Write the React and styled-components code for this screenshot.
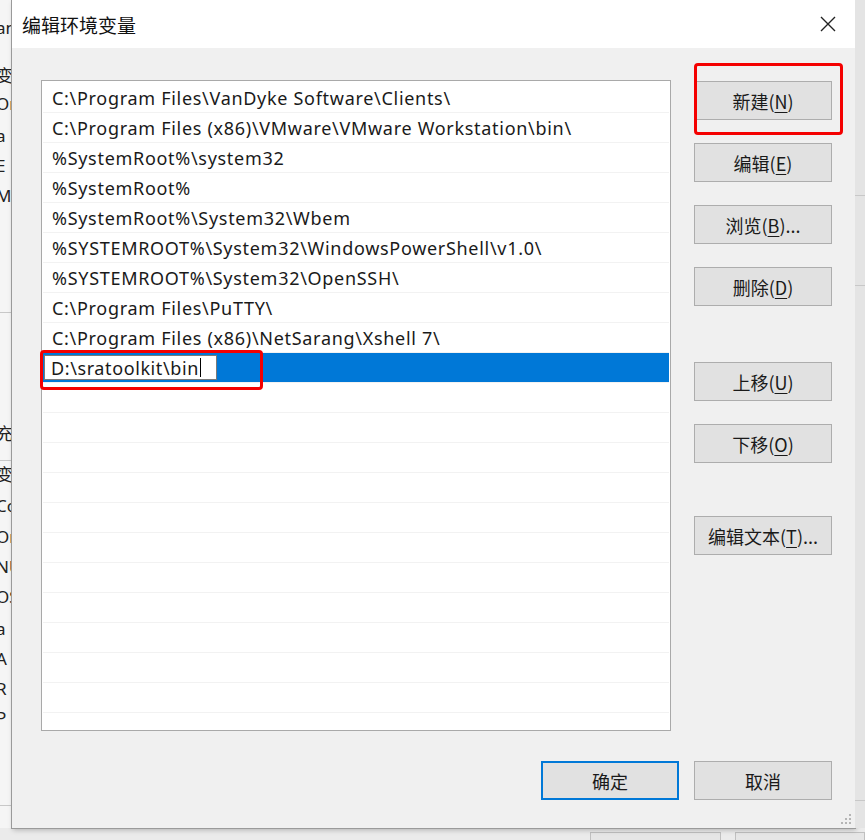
import styled, { createGlobalStyle } from "styled-components";

const GlobalStyle = createGlobalStyle`
  html, body { margin: 0; padding: 0; }
  body {
    width: 865px;
    height: 840px;
    overflow: hidden;
    background: #f0f0f0;
    font-family: "Noto Sans", "Noto Sans CJK SC", sans-serif;
  }
`;

const paths = [
  "C:\\Program Files\\VanDyke Software\\Clients\\",
  "C:\\Program Files (x86)\\VMware\\VMware Workstation\\bin\\",
  "%SystemRoot%\\system32",
  "%SystemRoot%",
  "%SystemRoot%\\System32\\Wbem",
  "%SYSTEMROOT%\\System32\\WindowsPowerShell\\v1.0\\",
  "%SYSTEMROOT%\\System32\\OpenSSH\\",
  "C:\\Program Files\\PuTTY\\",
  "C:\\Program Files (x86)\\NetSarang\\Xshell 7\\",
];

const leftBits = [
  { y: 16, t: "an" },
  { y: 62, t: "变" },
  { y: 92, t: "Or" },
  { y: 124, t: "a" },
  { y: 154, t: "E" },
  { y: 184, t: "M" },
  { y: 420, t: "充" },
  { y: 461, t: "变" },
  { y: 494, t: "Co" },
  { y: 525, t: "Or" },
  { y: 555, t: "NU" },
  { y: 585, t: "OS" },
  { y: 617, t: "a" },
  { y: 647, t: "A" },
  { y: 677, t: "R" },
  { y: 706, t: "P" },
];

const Desktop = styled.div`
  display: grid;
  grid-template-columns: 12px 843px 10px;
  grid-template-rows: 828px 12px;
  width: 865px;
  height: 840px;
  background: #ebebeb;
`;

const BackStrip = styled.div`
  position: relative;
  overflow: hidden;
  background: ${(p) => p.$bg || "#f3f3f3"};
`;

const BackText = styled.div`
  position: absolute;
  left: -4px;
  font-size: 17px;
  color: #222;
  white-space: nowrap;
`;

const BackLine = styled.div`
  position: absolute;
  left: 0;
  right: 0;
  height: 1px;
  background: #c8c8c8;
`;

const BottomStrip = styled.div`
  grid-column: 1 / span 3;
  display: flex;
  align-items: flex-start;
  gap: 14px;
  padding-left: 590px;
  background: #ebebeb;
`;

const BackButton = styled.div`
  width: 136px;
  height: 20px;
  margin-top: 4px;
  border: 1px solid #c0c0c0;
  background: #e6e6e6;
`;

const Dialog = styled.div`
  position: relative;
  display: flex;
  flex-direction: column;
  background: #f0f0f0;
  box-shadow: 0 0 0 1px #9a9a9a, 1px 2px 5px rgba(0, 0, 0, 0.25);
`;

const TitleBar = styled.div`
  display: flex;
  align-items: center;
  justify-content: space-between;
  height: 48px;
  padding: 0 19px 0 10px;
  background: #fff;
`;

const Title = styled.div`
  font-family: "Noto Sans CJK SC", sans-serif;
  font-size: 19px;
  color: #111;
`;

const Body = styled.div`
  display: flex;
  gap: 23px;
  padding: 32px 0 0 29px;
`;

const ListBox = styled.div`
  position: relative;
  width: 626px;
  height: 645px;
  padding: 2px 1px;
  border: 1px solid #a9a9a9;
  background: #fff;
`;

const Rows = styled.div`
  height: 100%;
  overflow: hidden;
`;

const Row = styled.div`
  display: flex;
  align-items: center;
  height: 29px;
  padding-left: 9px;
  border-bottom: 1px solid #f2f2f2;
  font-size: 18px;
  letter-spacing: 0.7px;
  color: #1a1a1a;
  white-space: nowrap;
  background: ${(p) => (p.$selected ? "#0078d7" : "#fff")};
`;

const EditBox = styled.div`
  display: flex;
  align-items: center;
  width: 173px;
  height: 25px;
  margin-left: -8px;
  padding-left: 6px;
  box-sizing: border-box;
  border: 1px solid #7a7a7a;
  background: #fff;
  font-size: 18px;
  letter-spacing: 0.6px;
  color: #1a1a1a;
`;

const Caret = styled.span`
  display: inline-block;
  width: 1px;
  height: 19px;
  margin-left: 1px;
  background: #000;
`;

const Highlight = styled.div`
  position: absolute;
  box-sizing: border-box;
  border: 3px solid #f40000;
  border-radius: 4px;
  pointer-events: none;
  left: ${(p) => p.$x}px;
  top: ${(p) => p.$y}px;
  width: ${(p) => p.$w}px;
  height: ${(p) => p.$h}px;
`;

const Buttons = styled.div`
  display: flex;
  flex-direction: column;
  gap: 23px;
  padding-top: 1px;
`;

const ButtonWrap = styled.div`
  position: relative;
  margin-top: ${(p) => p.$gap || 0}px;
`;

const Button = styled.div`
  display: flex;
  align-items: center;
  justify-content: center;
  width: 138px;
  height: 39px;
  box-sizing: border-box;
  border: ${(p) => (p.$default ? "2px solid #0078d7" : "1px solid #adadad")};
  background: #e1e1e1;
  font-family: "Noto Sans CJK SC", sans-serif;
  font-size: 18px;
  color: #1a1a1a;
  u { text-decoration-thickness: 1px; text-underline-offset: 3px; }
`;

const Footer = styled.div`
  display: flex;
  justify-content: flex-end;
  gap: 15px;
  padding: 30px 23px 0 0;
`;

const CloseIcon = () => (
  <svg width="16" height="16" viewBox="0 0 16 16">
    <path d="M1 1 L15 15 M15 1 L1 15" stroke="#222" strokeWidth="1.4" />
  </svg>
);

const Grip = styled.svg`
  position: absolute;
  right: 3px;
  bottom: 3px;
`;

const ResizeGrip = () => (
  <Grip width="12" height="12" viewBox="0 0 12 12">
    {[
      [9, 1], [9, 5], [5, 5], [9, 9], [5, 9], [1, 9],
    ].map(([x, y]) => (
      <rect key={`${x}-${y}`} x={x} y={y} width="2" height="2" fill="#b5b5b5" />
    ))}
  </Grip>
);

const Label = ({ text, k, tail = "" }) => (
  <span>
    {text}(<u>{k}</u>){tail}
  </span>
);

export default function App() {
  const emptyRows = Array.from({ length: 12 });
  return (
    <>
      <GlobalStyle />
      <Desktop>
        <BackStrip $bg="#f5f5f5">
          <BackLine style={{ top: 312 }} />
          <BackLine style={{ top: 460 }} />
          <BackLine style={{ top: 805 }} />
          {leftBits.map((b, i) => (
            <BackText key={i} style={{ top: b.y }}>
              {b.t}
            </BackText>
          ))}
        </BackStrip>
        <Dialog>
          <TitleBar>
            <Title>编辑环境变量</Title>
            <CloseIcon />
          </TitleBar>
          <Body>
            <ListBox>
              <Rows>
                {paths.map((p) => (
                  <Row key={p}>{p}</Row>
                ))}
                <Row $selected>
                  <EditBox>
                    D:\sratoolkit\bin
                    <Caret />
                  </EditBox>
                </Row>
                {emptyRows.map((_, i) => (
                  <Row key={i} />
                ))}
              </Rows>
              <Highlight $x={-2} $y={269} $w={223} $h={40} />
            </ListBox>
            <Buttons>
              <ButtonWrap>
                <Button>
                  <Label text="新建" k="N" />
                </Button>
                <Highlight $x={0} $y={-18} $w={149} $h={72} />
              </ButtonWrap>
              <Button>
                <Label text="编辑" k="E" />
              </Button>
              <Button>
                <Label text="浏览" k="B" tail="..." />
              </Button>
              <Button>
                <Label text="删除" k="D" />
              </Button>
              <ButtonWrap $gap={33}>
                <Button>
                  <Label text="上移" k="U" />
                </Button>
              </ButtonWrap>
              <Button>
                <Label text="下移" k="O" />
              </Button>
              <ButtonWrap $gap={30}>
                <Button>
                  <Label text="编辑文本" k="T" tail="..." />
                </Button>
              </ButtonWrap>
            </Buttons>
          </Body>
          <Footer>
            <Button $default>确定</Button>
            <Button>取消</Button>
          </Footer>
          <ResizeGrip />
        </Dialog>
        <BackStrip $bg="#e4e4e4">
          <BackLine style={{ top: 195 }} />
          <BackLine style={{ top: 285 }} />
          <BackLine style={{ top: 800 }} />
        </BackStrip>
        <BottomStrip>
          <BackButton />
          <BackButton />
        </BottomStrip>
      </Desktop>
    </>
  );
}
